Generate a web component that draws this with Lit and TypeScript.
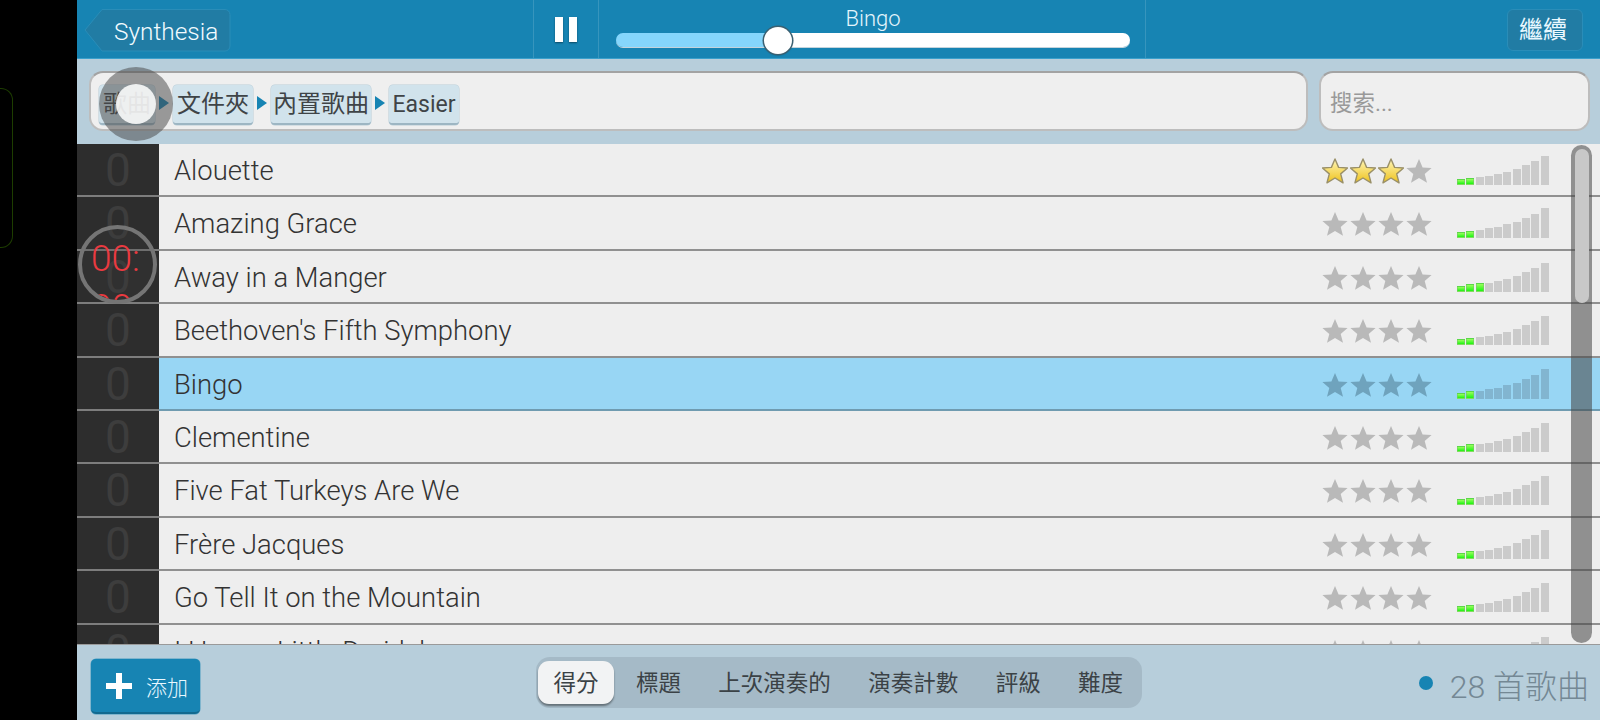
import { LitElement, html, css, svg, unsafeCSS } from "lit";
import { customElement } from "lit/decorators.js";

const FONT = `Roboto, "Noto Sans CJK TC", sans-serif`;
const STAR = "M13 1 L16.6 9.4 L25.6 10 L18.7 15.9 L21 24.8 L13 20 L5 24.8 L7.3 15.9 L.4 10 L9.4 9.4 Z";

type Song = { t: string; rated?: number; green: number; h: number[] };
const base = [5, 7, 8, 9, 11, 13, 16, 20, 24, 29];
const tall = [5, 7, 8, 10, 11, 14, 16, 20, 24, 30];
const songs: Song[] = [
  { t: "Alouette", rated: 3, green: 2, h: base },
  { t: "Amazing Grace", green: 2, h: tall },
  { t: "Away in a Manger", green: 3, h: base },
  { t: "Beethoven's Fifth Symphony", green: 2, h: base },
  { t: "Bingo", green: 2, h: tall },
  { t: "Clementine", green: 2, h: base },
  { t: "Five Fat Turkeys Are We", green: 2, h: base },
  { t: "Frère Jacques", green: 2, h: base },
  { t: "Go Tell It on the Mountain", green: 2, h: base },
  { t: "I Have a Little Dreidel", green: 2, h: base },
];

@customElement("app-root")
export class AppRoot extends LitElement {
  static styles = css`
    :host { display: block; width: 1600px; height: 720px; background: #000; font-family: ${unsafeCSS(FONT)}; position: relative; overflow: hidden; }
    .app { margin-left: 77px; width: 1523px; height: 720px; display: flex; flex-direction: column; background: #b7cedb; }
    .top { height: 59px; flex: none; box-sizing: border-box; background: #1784b3; border-bottom: 1px solid #3aa0cc; display: flex; align-items: stretch; color: #fff; }
    .backwrap { width: 455.5px; box-sizing: border-box; padding: 9px 0 0 7px; flex: none; }
    .back { width: 147px; height: 42px; display: block; position: relative; }
    .back svg { display: block; }
    .back span { position: absolute; left: 30px; top: 0; line-height: 46px; font-size: 24.4px; font-weight: 300; color: #f2fbff; }
    .pause { width: 66.5px; flex: none; display: flex; gap: 6px; justify-content: center; align-items: center; box-sizing: border-box; border-left: 1px solid #3795bd; border-right: 1px solid #3795bd; }
    .pause i { width: 8px; height: 25px; background: #fff; box-shadow: 0 1px 2px rgba(0,0,0,.45); }
    .track { width: 547px; flex: none; box-sizing: border-box; border-right: 1px solid #3795bd; padding: 0 15px 0 17px; display: flex; flex-direction: column; align-items: stretch; }
    .title { text-align: center; font-size: 22px; font-weight: 300; height: 33px; line-height: 38px; color: #e4f5fc; }
    .slider { height: 14px; border-radius: 7px; background: linear-gradient(90deg, #85d6fc 0 164px, #fff 164px); position: relative; box-shadow: 0 1px 0 #c5d4dc; }
    .thumb { position: absolute; left: 148px; top: -6px; width: 28px; height: 27px; border-radius: 50%; background: #fff; box-shadow: 0 0 0 1.5px #3b6071, 0 1px 2px rgba(0,0,0,.4); }
    .right { flex: 1; display: flex; justify-content: flex-end; padding: 9px 17px 0 0; }
    .btn { width: 76px; height: 42px; box-sizing: border-box; border-radius: 6px; background: #217ca4; border: 1px solid #2a8db8; text-align: center; line-height: 40px; font-size: 24px; color: #e9f8ff; padding-right: 4px; }

    .crumbbar { height: 85px; flex: none; box-sizing: border-box; padding: 12px 10px 13px 12px; display: flex; gap: 11px; }
    .crumbs { width: 1219px; box-sizing: border-box; flex: none; border-radius: 14px; background: #efefef; border: 2px solid #bdbdbd; border-top-color: #a3a3a3; padding: 12px 0 0 8px; display: flex; align-items: flex-start; }
    .crumb { height: 40px; box-sizing: border-box; border-radius: 4px; background: #d1e3ec; border-bottom: 2px solid #9db6c3; box-shadow: 0 0 0 .5px #b9cdd8; font-size: 24px; line-height: 39px; color: #3f4447; padding: 0 4px; font-weight: 400; white-space: nowrap; }
    .crumb.tight { padding: 0 2px; }
    .crumb.en { font-size: 23px; padding: 0 3.5px; }
    .arrow { width: 18px; display: flex; justify-content: center; padding-top: 11px; flex: none; }
    .arrow b { width: 0; height: 0; border-left: 10px solid #1784b3; border-top: 7px solid transparent; border-bottom: 7px solid transparent; }
    .search { flex: 1; box-sizing: border-box; border-radius: 14px; background: #efefef; border: 2px solid #bdbdbd; border-top-color: #a3a3a3; padding-left: 9px; font-size: 22.5px; line-height: 61px; color: #999; font-weight: 400; }

    .list { flex: 1; min-height: 0; overflow: hidden; position: relative; background: #ededed; border-bottom: 1px solid #9a9a9a; }
    .row { height: 53.4px; box-sizing: border-box; display: flex; background: #eeeeee; border-bottom: 2px solid #909090; }
    .row.sel { background: #98d6f4; border-bottom-color: #6f9bb0; }
    .score { width: 82px; flex: none; background: #2d2d2d; color: #3d3d3d; text-align: center; font-size: 46px; font-weight: 400; line-height: 52px; margin-bottom: -2px; border-bottom: 2px solid #7d7d7d; box-sizing: content-box; height: 51.4px; overflow: hidden; }
    .name { flex: 1; padding-left: 15px; font-size: 27.4px; font-weight: 300; line-height: 55px; color: #333; white-space: nowrap; }
    .stars { width: 114px; flex: none; display: flex; margin-top: 14px; height: 26px; }
    .stars svg { margin-right: 2px; flex: none; }
    .bars { width: 92px; flex: none; margin: 0 0 0 21px; height: 41px; display: flex; align-items: flex-end; gap: 1.3px; }
    .bars i { width: 8px; background: #cbcbcb; flex: none; }
    .row.sel .bars i { background: #82b5d0; }
    .bars i.g, .row.sel .bars i.g { background: linear-gradient(#97ff5c, #1cf512); box-sizing: border-box; border: 1px solid rgba(125,195,105,.6); }

    .gutter { width: 51px; flex: none; }

    .scroll { position: absolute; right: 8px; top: 1px; bottom: 1px; width: 21px; border-radius: 11px; background: rgba(70,70,70,.56); }
    .scroll div { margin: 4px 3.5px 0; height: 154px; border-radius: 8px; background: #c8c8c8; }

    .foot { height: 75px; flex: none; display: flex; align-items: flex-start; padding: 0 0 0 14px; box-sizing: border-box; position: relative; }
    .add { margin-top: 14px; width: 109px; height: 55px; box-sizing: border-box; border-radius: 5px; background: #1784b3; border-bottom: 2px solid #12698f; box-shadow: 0 0 0 .5px #4a9cc0; display: flex; align-items: center; padding-left: 14px; gap: 13px; color: #e9f8ff; font-size: 21px; font-weight: 300; flex: none; }
    .add svg { flex: none; }
    .tabs { margin: 12px 0 0 336px; height: 51px; box-sizing: border-box; background: #a5bac7; border-radius: 14px; display: flex; gap: 6.4px; padding: 4px 3px 4px 2px; align-items: stretch; flex: none; }
    .tab { font-size: 22.5px; line-height: 45px; padding: 0 15.5px; color: #3b4246; text-align: center; font-weight: 400; white-space: nowrap; }
    .tab.on { background: #f2f3f4; border-radius: 11px; box-shadow: 0 2px 2px rgba(0,0,0,.4); }
    .count { margin: 17px 0 0 auto; padding-right: 11px; display: flex; align-items: center; height: 44px; font-size: 32px; font-weight: 300; color: #748894; gap: 17px; white-space: nowrap; }
    .count i { width: 14px; height: 14px; border-radius: 50%; background: #1784b3; margin-top: -2px; }

    .ghost { position: absolute; left: 0; top: 88px; width: 13px; height: 160px; box-sizing: border-box; border: 1px solid #1d3d00; border-left: 0; border-radius: 0 12px 12px 0; }
    .touch { position: absolute; left: 99px; top: 67px; width: 74px; height: 74px; border-radius: 50%; background: rgba(72,72,72,.52); display: flex; align-items: center; justify-content: center; }
    .touch i { width: 40px; height: 40px; border-radius: 50%; background: rgba(255,255,255,.86); }
    .timer { position: absolute; left: 78px; top: 225px; width: 79px; height: 79px; box-sizing: border-box; border-radius: 50%; border: 4px solid #757575; overflow: hidden; color: #ea3a40; font-size: 37px; font-weight: 300; line-height: 49px; padding: 5px 0 0 9px; background: rgba(60,60,60,.22); }
  `;

  star(fill: string, gold: boolean) {
    return html`<svg width="26" height="26" viewBox="0 0 26 26">
      ${gold
        ? svg`<defs><linearGradient id="gold" x1="0" y1="0" x2="0" y2="1"><stop offset="0" stop-color="#fff6b8"/><stop offset="1" stop-color="#eec21c"/></linearGradient></defs><path d=${STAR} fill="url(#gold)" stroke="#9a9068" stroke-width="1.4" stroke-linejoin="round"/>`
        : svg`<path d=${STAR} fill=${fill}/>`}
    </svg>`;
  }

  renderRow(s: Song) {
    const sel = s.t === "Bingo";
    return html`<div class="row ${sel ? "sel" : ""}">
      <div class="score">0</div>
      <div class="name">${s.t}</div>
      <div class="stars">
        ${[0, 1, 2, 3].map((i) => this.star(sel ? "#6fa3bd" : "#b9b9b9", (s.rated ?? 0) > i))}
      </div>
      <div class="bars">
        ${s.h.map((h, i) => html`<i class=${i < s.green ? "g" : ""} style="height:${i < s.green ? 6 + i * 1.5 : h}px"></i>`)}
      </div>
      <div class="gutter"></div>
    </div>`;
  }

  render() {
    return html`
      <div class="app">
        <div class="top">
          <div class="backwrap">
            <div class="back">
              <svg width="147" height="43" viewBox="0 0 147 43">
                <path d="M18 .5 H141 a5 5 0 0 1 5 5 V37 a5 5 0 0 1 -5 5 H18 L1 21 Z" fill="#217ca4" stroke="#2a8db8"/>
              </svg>
              <span>Synthesia</span>
            </div>
          </div>
          <div class="pause"><i></i><i></i></div>
          <div class="track">
            <div class="title">Bingo</div>
            <div class="slider"><div class="thumb"></div></div>
          </div>
          <div class="right"><div class="btn">繼續</div></div>
        </div>
        <div class="crumbbar">
          <div class="crumbs">
            <div class="crumb">歌曲</div><div class="arrow"><b></b></div>
            <div class="crumb">文件夾</div><div class="arrow"><b></b></div>
            <div class="crumb tight">內置歌曲</div><div class="arrow"><b></b></div>
            <div class="crumb en">Easier</div>
          </div>
          <div class="search">搜索...</div>
        </div>
        <div class="list">
          ${songs.map((s) => this.renderRow(s))}
          <div class="scroll"><div></div></div>
        </div>
        <div class="foot">
          <div class="add">
            <svg width="28" height="28" viewBox="0 0 28 28"><path d="M11 1h6v10h10v6H17v10h-6V17H1v-6h10z" fill="#fff"/></svg>
            <span>添加</span>
          </div>
          <div class="tabs">
            <div class="tab on">得分</div>
            <div class="tab">標題</div>
            <div class="tab">上次演奏的</div>
            <div class="tab">演奏計數</div>
            <div class="tab">評級</div>
            <div class="tab">難度</div>
          </div>
          <div class="count"><i></i><span>28 首歌曲</span></div>
        </div>
      </div>
      <div class="ghost"></div>
      <div class="touch"><i></i></div>
      <div class="timer">00:<br />00</div>
    `;
  }
}
